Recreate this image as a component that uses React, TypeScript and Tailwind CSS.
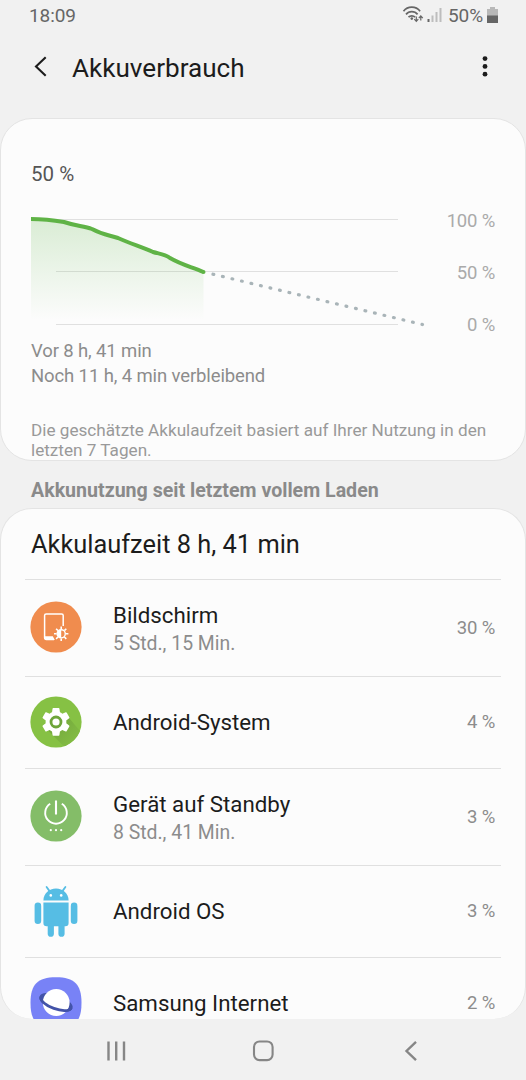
import type { ReactNode } from 'react'

interface UsageItem {
  name: string
  duration?: string
  percent: string
  height: string
  icon: ReactNode
}

const DisplayIcon = () => (
  <svg className="size-[52px]" viewBox="0 0 52 52" fill="none">
    <circle cx="26" cy="26" r="25.6" fill="#f08c4e" />
    <path d="M33.2 25V14.5a1.6 1.6 0 0 0-1.6-1.6H16.2a1.6 1.6 0 0 0-1.6 1.6v22.3a1.6 1.6 0 0 0 1.6 1.6H24" stroke="#fff" strokeWidth="1.5" />
    <path d="M14.5 35.2h8.3l2 3.9h-8.4a1.9 1.9 0 0 1-1.9-1.9z" fill="#fff" />
    <circle cx="31.2" cy="32.8" r="4.1" stroke="#fff" strokeWidth="1.4" />
    <path d="M31.2 28.7a4.1 4.1 0 0 0 0 8.2z" fill="#fff" />
    <path d="M31.2 25.6v2.6M31.2 37.4V40M24 32.8h2.6M35.8 32.8h2.6M26.1 27.7l1.9 1.9M34.4 36l1.9 1.9M36.3 27.7l-1.9 1.9M28 36l-1.9 1.9" stroke="#fff" strokeWidth="1.6" />
  </svg>
)

const SystemIcon = () => (
  <svg className="size-[52px]" viewBox="0 0 52 52" fill="none">
    <defs>
      <clipPath id="system-disc">
        <circle cx="26" cy="26" r="25.6" />
      </clipPath>
      <linearGradient id="system-shadow" x1="26" y1="26" x2="44" y2="44" gradientUnits="userSpaceOnUse">
        <stop offset="0" stopColor="#74a93c" />
        <stop offset="1" stopColor="#82bb43" />
      </linearGradient>
    </defs>
    <circle cx="26" cy="26" r="25.6" fill="#86c144" />
    <path d="M15 31.5L36 52.5L56 42L39 22z" fill="url(#system-shadow)" clipPath="url(#system-disc)" />
    <path
      transform="translate(8.7 8.6) scale(1.44)"
      d="M19.14 12.94c.04-.3.06-.61.06-.94 0-.32-.02-.64-.07-.94l2.03-1.58a.49.49 0 0 0 .12-.61l-1.92-3.32a.488.488 0 0 0-.59-.22l-2.39.96c-.5-.38-1.03-.7-1.62-.94l-.36-2.54a.484.484 0 0 0-.48-.41h-3.84c-.24 0-.43.17-.47.41l-.36 2.54c-.59.24-1.13.57-1.62.94l-2.39-.96c-.22-.08-.47 0-.59.22L2.74 8.87c-.12.21-.08.47.12.61l2.03 1.58c-.05.3-.09.63-.09.94s.02.64.07.94l-2.03 1.58a.49.49 0 0 0-.12.61l1.92 3.32c.12.22.37.29.59.22l2.39-.96c.5.38 1.03.7 1.62.94l.36 2.54c.05.24.24.41.48.41h3.84c.24 0 .44-.17.47-.41l.36-2.54c.59-.24 1.13-.56 1.62-.94l2.39.96c.22.08.47 0 .59-.22l1.92-3.32c.12-.22.07-.47-.12-.61z"
      fill="#fff"
    />
    <circle cx="26" cy="26" r="5" stroke="#6ea53a" strokeWidth="2.8" />
  </svg>
)

const StandbyIcon = () => (
  <svg className="size-[52px]" viewBox="0 0 52 52" fill="none">
    <circle cx="26" cy="26" r="25.6" fill="#84bd68" />
    <path d="M20.2 13.8a10.8 10.8 0 1 0 11.6 0" stroke="#fff" strokeWidth="1.9" />
    <path d="M26 10.6v14" stroke="#fff" strokeWidth="2.1" />
    <circle cx="20.8" cy="40.2" r="1.1" fill="#fff" />
    <circle cx="26" cy="40.2" r="1.1" fill="#fff" />
    <circle cx="31.2" cy="40.2" r="1.1" fill="#fff" />
  </svg>
)

const AndroidIcon = () => (
  <svg className="size-[52px]" viewBox="0 0 52 52" fill="#56bde4">
    <path d="M13.4 15.6c0-7 5.5-12 12.6-12s12.6 5 12.6 12z" />
    <path d="M19.2 5.6l-2.6-3.6M32.8 5.6l2.6-3.6" stroke="#56bde4" strokeWidth="1.8" strokeLinecap="round" />
    <circle cx="20.8" cy="10.4" r="1.3" fill="#fff" />
    <circle cx="31.2" cy="10.4" r="1.3" fill="#fff" />
    <path d="M13.4 17.6h25.2V38a3.2 3.2 0 0 1-3.2 3.2H16.6a3.2 3.2 0 0 1-3.2-3.2z" />
    <rect x="4.6" y="17.6" width="6.6" height="21.4" rx="3.3" />
    <rect x="40.8" y="17.6" width="6.6" height="21.4" rx="3.3" />
    <rect x="17.7" y="36" width="6.2" height="15.8" rx="3.1" />
    <rect x="28.4" y="36" width="6.2" height="15.8" rx="3.1" />
  </svg>
)

const InternetIcon = () => (
  <svg className="size-[52px]" viewBox="0 0 52 52" fill="none">
    <path d="M26 .3C44.5 .3 51.5 7.5 51.5 26S44.5 51.7 26 51.7 .5 44.5 .5 26 7.5 .3 26 .3z" fill="#7882f6" />
    <ellipse cx="26" cy="25.5" rx="17.5" ry="7.8" fill="#4353a8" transform="rotate(20 26 25.5)" />
    <circle cx="26.2" cy="25.5" r="13.4" fill="#fff" />
    <path d="M8.5 25.5a17.5 7.8 0 0 0 35 0h-3a14.5 4.8 0 0 1-29 0z" fill="#4353a8" transform="rotate(20 26 25.5)" />
  </svg>
)

const items: UsageItem[] = [
  { name: 'Bildschirm', duration: '5 Std., 15 Min.', percent: '30 %', height: 'h-[97px]', icon: <DisplayIcon /> },
  { name: 'Android-System', percent: '4 %', height: 'h-[92px]', icon: <SystemIcon /> },
  { name: 'Gerät auf Standby', duration: '8 Std., 41 Min.', percent: '3 %', height: 'h-[97px]', icon: <StandbyIcon /> },
  { name: 'Android OS', percent: '3 %', height: 'h-[92px]', icon: <AndroidIcon /> },
  { name: 'Samsung Internet', percent: '2 %', height: 'h-[92px]', icon: <InternetIcon /> }
]

function StatusBar() {
  return (
    <div className="flex h-8 items-center justify-between pl-[29px] pr-7 text-[19px] tracking-[-0.1px] text-[#666]">
      <span>18:09</span>
      <div className="flex items-center">
        <svg className="h-5 w-[42px]" viewBox="402 6 42 20" fill="none">
          <g stroke="#666" strokeWidth="1.7">
            <path d="M403.5 11.2a10.5 10.5 0 0 1 16.6 0" />
            <path d="M406 14.4a7.5 7.5 0 0 1 11.6 0" />
            <path d="M408.5 17.2a4.6 4.6 0 0 1 6.6 0" />
          </g>
          <circle cx="411.8" cy="18.6" r="1.3" fill="#666" />
          <path d="M416.3 16.5v4.6M414.3 19.1l2 2.2 2-2.2M420.8 20.6v-4.5M418.8 18.1l2-2.2 2 2.2" stroke="#666" strokeWidth="1.2" />
          <path d="M427.5 22h2v-3h-2z" fill="#666" />
          <path d="M431.5 22h2v-6.5h-2zM435.5 22h2V12h-2zM439.5 22h2V8h-2z" fill="#bdbdbd" />
        </svg>
        <span className="ml-1">50%</span>
        <svg className="-mt-0.5 ml-1 h-4 w-[11px]" viewBox="0 0 11 16">
          <path d="M0 2h3V0h5v2h3v7H0z" fill="#b8b8b8" />
          <path d="M0 8.500h11V16H0z" fill="#666" />
        </svg>
      </div>
    </div>
  )
}

function BatteryChart() {
  return (
    <svg className="h-[130px] w-[400px]" viewBox="31 208 400 130" fill="none">
      <defs>
        <linearGradient id="usage-fill" x1="0" y1="219" x2="0" y2="320" gradientUnits="userSpaceOnUse">
          <stop offset="0" stopColor="#5fb548" stopOpacity="0.22" />
          <stop offset="1" stopColor="#5fb548" stopOpacity="0" />
        </linearGradient>
      </defs>
      <path d="M56 219.5H398M56 271.5H398M56 324.5H398" stroke="#e0e0e0" />
      <path d="M31 219C45 219 54 220 64 222C76 226 84 226 92 229C103 235 109 235 118 238C130 243 142 247 153 252C160 253 165 254 170 258C182 265 192 267 203.5 272V320H31z" fill="url(#usage-fill)" />
      <path d="M31 219C45 219 54 220.3 64 222C76 226 84 226 92 229C103 235 109 235 118 238C130 243.5 142 247 153 252C160 254 165 254 170 258C182 265 192 267 203.5 272" stroke="#5fb346" strokeWidth="4" />
      <circle cx="203.5" cy="272" r="2" fill="#5fb346" />
      <path d="M213 274.2L422.5 324.5" stroke="#a9b4b8" strokeWidth="3.2" strokeLinecap="round" strokeDasharray="0.8 8.97" />
    </svg>
  )
}

export default function App() {
  return (
    <div className="flex h-[1080px] w-[526px] flex-col overflow-hidden bg-[#f1f1f1] font-[Roboto,sans-serif] text-[#1c1c1c]">
      <StatusBar />

      <header className="flex h-[86px] items-start pl-[33px] pr-[35px] pt-[19px]">
        <svg className="mt-[3px] h-6 w-4" viewBox="0 0 16 24" fill="none">
          <path d="M12.7 3.2L3 12.5L12.7 21.8" stroke="#1c1c1c" strokeWidth="2.1" />
        </svg>
        <h1 className="ml-[23px] flex-1 text-[26.1px] leading-[34px]">Akkuverbrauch</h1>
        <svg className="mt-[5px] h-6 w-3" viewBox="0 0 12 24" fill="#1c1c1c">
          <circle cx="6" cy="2.6" r="2.4" />
          <circle cx="6" cy="10.4" r="2.4" />
          <circle cx="6" cy="18.2" r="2.4" />
        </svg>
      </header>

      {/* Charge level */}
      <section className="h-[343px] shrink-0 rounded-[32px] border border-[#e4e4e4] bg-[#fcfcfc] px-[30px] pt-[43px]">
        <p className="text-[20.5px] leading-6 text-[#555]">50 %</p>
        <div className="mt-[22px] flex justify-between">
          <BatteryChart />
          <div className="flex flex-col gap-[26px] text-right text-[18.5px] leading-[26px] tracking-[-0.2px] text-[#aaa]">
            <span>100 %</span>
            <span>50 %</span>
            <span>0 %</span>
          </div>
        </div>
        <p className="text-[18.5px] leading-[26px] tracking-[-0.12px] text-[#8c8c8c]">Vor 8 h, 41 min</p>
        <p className="text-[18.5px] leading-[25px] tracking-[-0.12px] text-[#8c8c8c]">Noch 11 h, 4 min verbleibend</p>
        <p className="mt-[31px] whitespace-nowrap text-[17.15px] leading-5 text-[#999]">
          Die geschätzte Akkulaufzeit basiert auf Ihrer Nutzung in den
          <br />
          letzten 7 Tagen.
        </p>
      </section>

      <h2 className="h-[47px] shrink-0 pl-[31px] pt-[18px] text-[19.6px] font-bold leading-6 text-[#8a8a8a]">
        Akkunutzung seit letztem vollem Laden
      </h2>

      {/* App usage */}
      <section className="h-[511px] shrink-0 overflow-hidden rounded-[32px] border border-b-0 border-[#e4e4e4] bg-[#fcfcfc] px-6">
        <h3 className="h-[71px] border-b border-[#e0e0e0] pl-1.5 pt-[19px] text-[25.4px] leading-8">
          Akkulaufzeit 8 h, 41 min
        </h3>
        <ul>
          {items.map((item) => (
            <li key={item.name} className={`flex items-center border-b border-[#e0e0e0] pl-[5px] pr-1.5 ${item.height}`}>
              <div className="-mt-0.5">{item.icon}</div>
              <div className={`ml-[31px] flex-1 ${item.duration ? 'pt-0.5' : '-mt-0.5'}`}>
                <p className="text-[22.3px] leading-7">{item.name}</p>
                {item.duration && <p className="text-[19.4px] leading-[29px] text-[#8c8c8c]">{item.duration}</p>}
              </div>
              <span className={`text-[18.5px] tracking-[-0.2px] text-[#8c8c8c] ${item.duration ? 'pt-0.5' : ''}`}>
                {item.percent}
              </span>
            </li>
          ))}
        </ul>
      </section>

      <nav className="flex h-[61px] shrink-0 items-center justify-between px-[105px] pt-0.5">
        <svg className="h-6 w-[22px]" viewBox="0 0 22 24" stroke="#868686" strokeWidth="2.4">
          <path d="M3.5 2.5v19M11.2 2.5v19M19 2.5v19" />
        </svg>
        <svg className="h-6 w-6" viewBox="0 0 24 24" fill="none">
          <rect x="3" y="2.5" width="18.6" height="18.6" rx="5.5" stroke="#868686" strokeWidth="2.1" />
        </svg>
        <svg className="h-6 w-[22px]" viewBox="0 0 22 24" fill="none">
          <path d="M17 2.8L7.5 12L17 21.2" stroke="#868686" strokeWidth="2.4" />
        </svg>
      </nav>
    </div>
  )
}
